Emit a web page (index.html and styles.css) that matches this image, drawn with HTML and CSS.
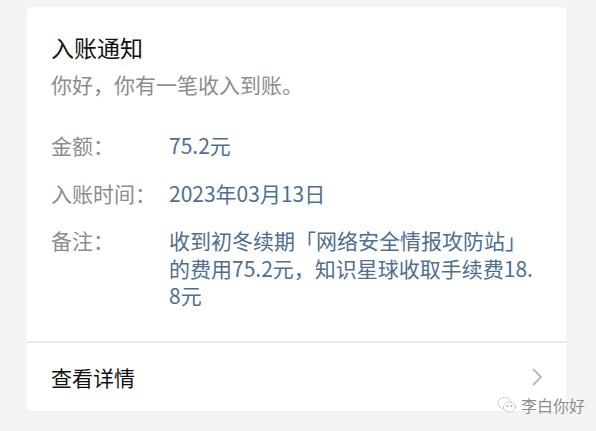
FILE: index.html
```html
<!DOCTYPE html>
<html lang="zh-CN">
<head>
<meta charset="utf-8">
<title>入账通知</title>
<link rel="stylesheet" href="styles.css">
</head>
<body>
<div class="page">
  <div class="card">
    <div class="content">
      <div class="title">入账通知</div>
      <div class="subtitle">你好，你有一笔收入到账。</div>
      <div class="rows">
        <div class="row">
          <div class="label">金额：</div>
          <div class="value">75.2元</div>
        </div>
        <div class="row">
          <div class="label">入账时间：</div>
          <div class="value">2023年03月13日</div>
        </div>
        <div class="row">
          <div class="label">备注：</div>
          <div class="value remark">收到初冬续期「网络安全情报攻防站」<br>的费用75.2元，知识星球收取手续费18.8元</div>
        </div>
      </div>
    </div>
    <div class="footer">
      <span class="more">查看详情</span>
      <svg class="chevron" width="12" height="20" viewBox="0 0 12 20"><path d="M2 2 L10 10 L2 18" fill="none" stroke="#b8b8b8" stroke-width="1.8"/></svg>
    </div>
  </div>
  <div class="watermark">
    <svg class="wm-icon" width="20" height="18" viewBox="0 0 20 18">
      <ellipse cx="7.5" cy="7" rx="6.5" ry="5.5" fill="#fff" stroke="#a8a8a8" stroke-width="0.9" stroke-dasharray="2 1.2"/>
      <ellipse cx="12.5" cy="11" rx="6" ry="5" fill="#fff" stroke="#a8a8a8" stroke-width="0.9" stroke-dasharray="2 1.2"/>
      <circle cx="10.5" cy="10" r="0.9" fill="#a8a8a8"/>
      <circle cx="14.5" cy="10" r="0.9" fill="#a8a8a8"/>
    </svg>
    <span class="wm-text">李白你好</span>
  </div>
</div>
</body>
</html>
```

FILE: styles.css
```css
html, body {
  margin: 0;
  padding: 0;
  background: #f3f3f3;
}
body {
  font-family: "Noto Sans CJK SC", "Noto Sans", sans-serif;
  width: 596px;
  height: 431px;
  overflow: hidden;
}
.page {
  position: relative;
  width: 596px;
  height: 431px;
  padding: 7px 0 0 27px;
  box-sizing: border-box;
}
.card {
  width: 539px;
  height: 404px;
  background: #fff;
  border-radius: 4px;
  display: flex;
  flex-direction: column;
}
.content {
  padding: 25px 0 0 24px;
  height: 336px;
  flex-shrink: 0;
  box-sizing: border-box;
  border-bottom: 2px solid #e8e8e8;
}
.title {
  font-size: 23px;
  line-height: 30px;
  color: #111;
}
.subtitle {
  font-size: 21px;
  line-height: 30px;
  margin-top: 7px;
  color: #8c8c8c;
}
.rows {
  margin-top: 33px;
  display: flex;
  flex-direction: column;
  gap: 20px;
}
.row {
  display: flex;
  font-size: 21px;
  line-height: 27.5px;
}
.label {
  width: 118px;
  flex-shrink: 0;
  color: #8c8c8c;
}
.value {
  color: #4e6e92;
  width: 368px;
  word-break: break-all;
}
.footer {
  flex: 1;
  display: flex;
  align-items: center;
  justify-content: space-between;
  padding: 0 23px 0 24px;
}
.more {
  font-size: 21px;
  color: #111;
}
.chevron {
  display: block;
}
.watermark {
  position: absolute;
  left: 497px;
  top: 395px;
  display: flex;
  align-items: center;
  gap: 4px;
}
.wm-text {
  font-size: 16px;
  line-height: 20px;
  color: #8c8c8c;
  text-shadow: 0 0 1px #fff, 0 0 1px #fff;
}
```
